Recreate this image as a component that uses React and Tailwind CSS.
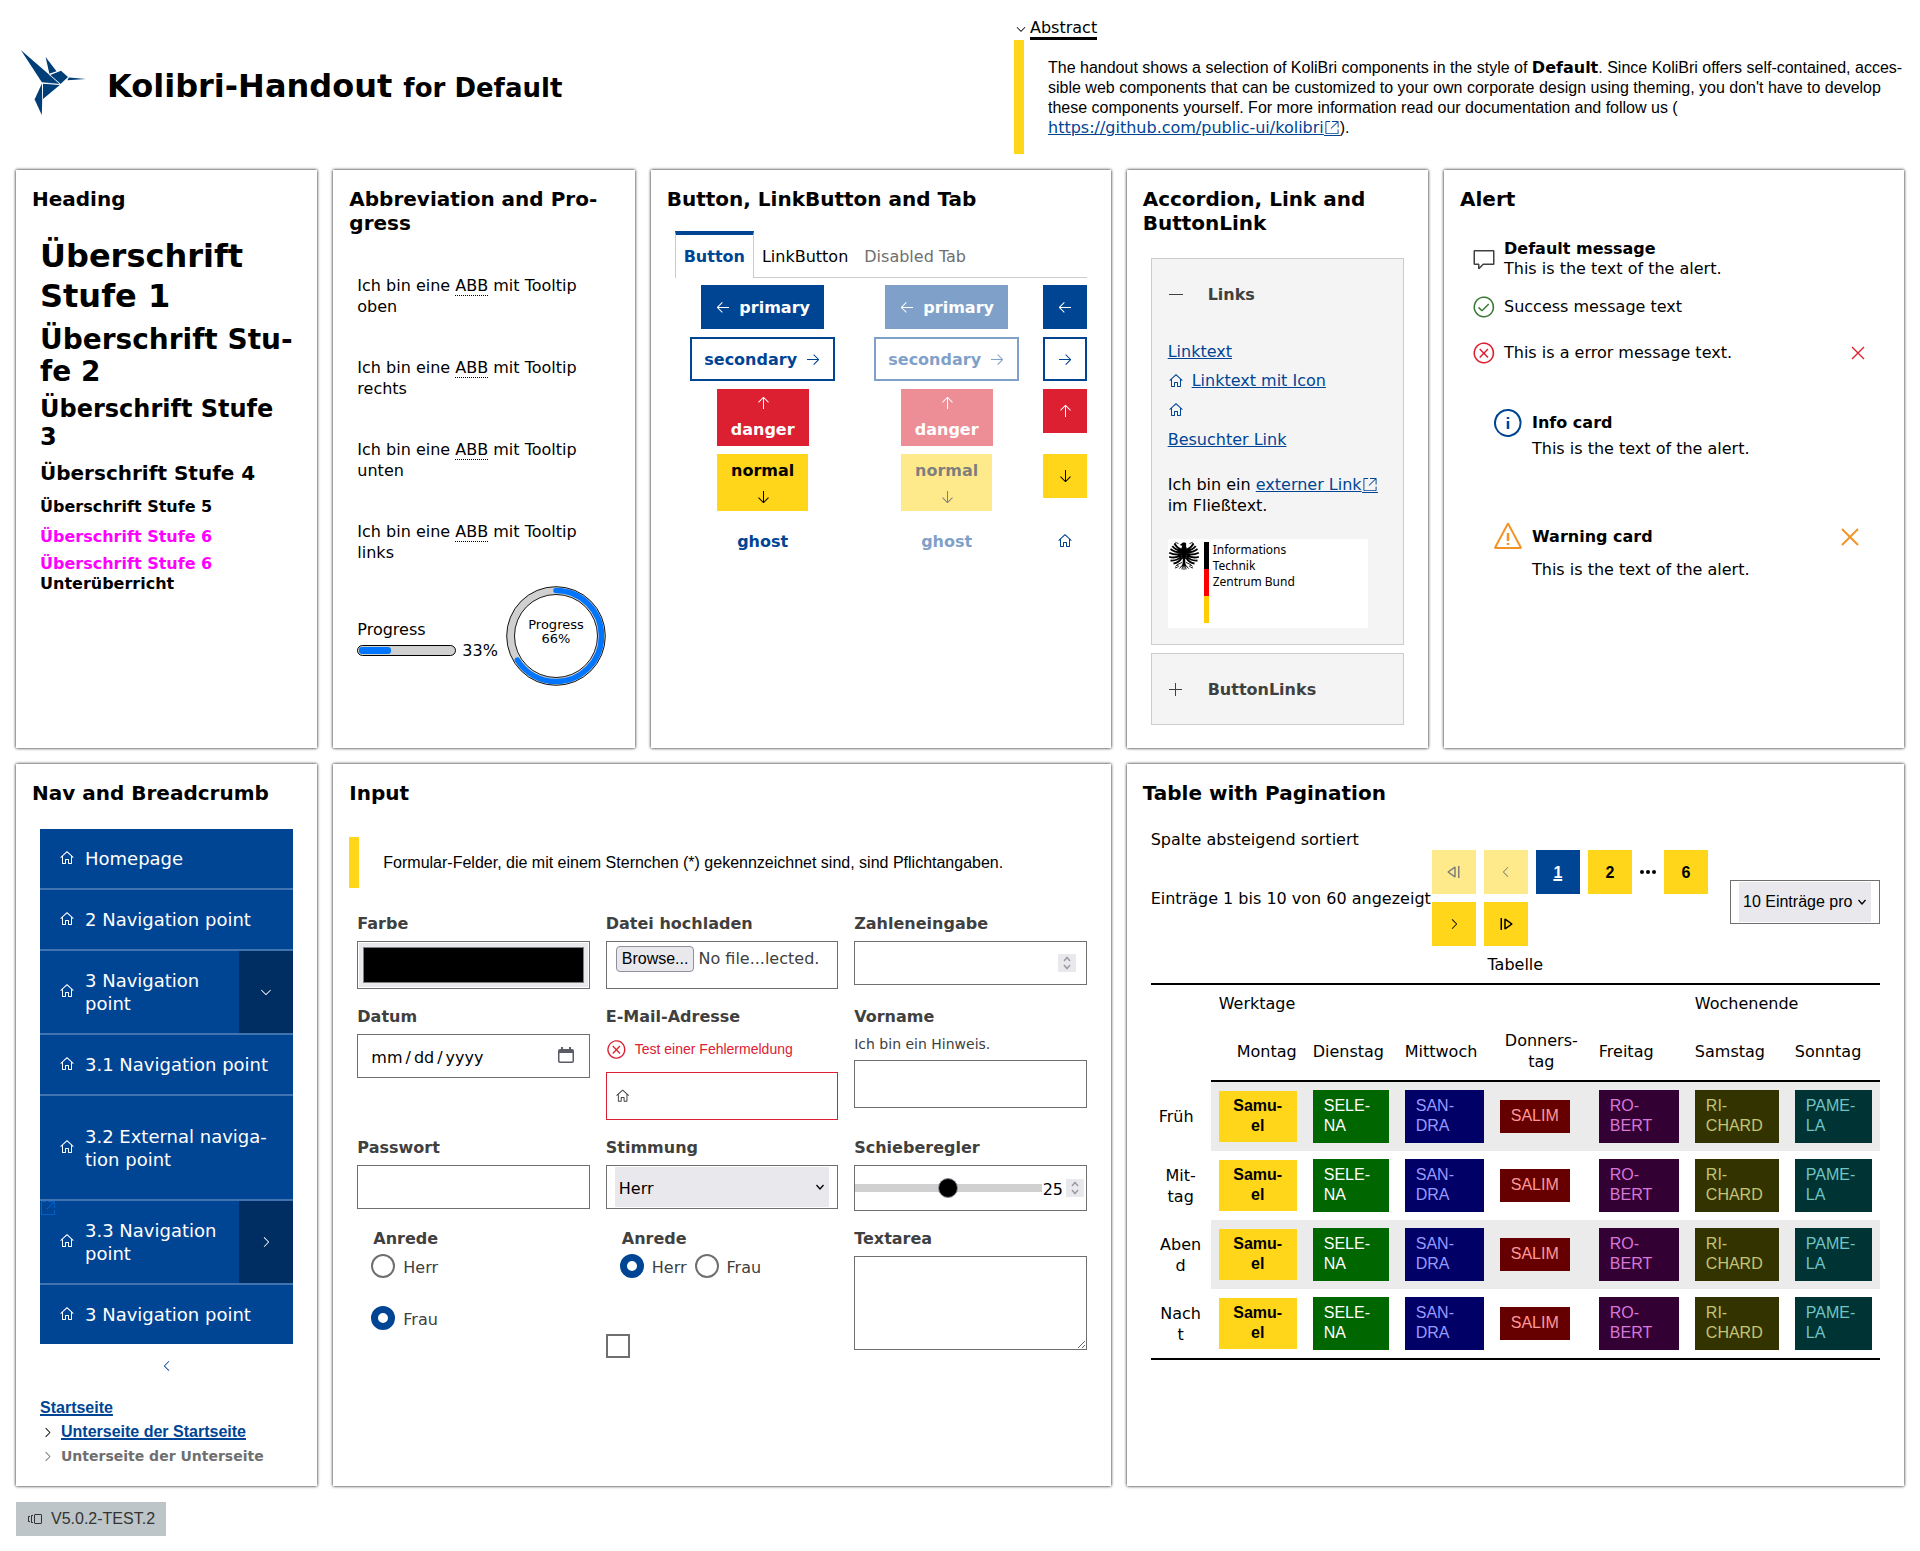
import React from "react";
import {
  VscAdd,
  VscArrowDown,
  VscArrowLeft,
  VscArrowRight,
  VscArrowUp,
  VscChevronDown,
  VscChevronLeft,
  VscChevronRight,
  VscComment,
  VscDebugContinue,
  VscDebugReverseContinue,
  VscError,
  VscHome,
  VscInfo,
  VscLinkExternal,
  VscPass,
  VscVersions,
  VscWarning,
} from "react-icons/vsc";

const SANS = "font-['DejaVu_Sans',Verdana,sans-serif]";
const ARIAL = "font-['Liberation_Sans',Arial,sans-serif]";

function Card({ title, span, children, tall }) {
  return (
    <section
      className={`${span} ${tall ? "min-h-[722px]" : "min-h-[578px]"} bg-white px-4 pt-[17px] pb-4 shadow-[0_0_3px_#000]`}
    >
      <h2 className="text-[20px] leading-6 font-bold">{title}</h2>
      {children}
    </section>
  );
}

function KolibriLogo() {
  return (
    <svg width="68" height="74" viewBox="20 48 68 74" fill="#003e78" aria-label="KoliBri" role="img">
      <polygon points="20.8,50 49,74.5 60,84.2 42,82.6" />
      <polygon points="45.6,57 56.5,71.2 49.4,73.8" />
      <polygon points="50.3,75 61,70.8 68,77 60.6,84" />
      <polygon points="69,77.4 86,79 67.4,80.3 68.3,78.4" />
      <polygon points="43,83.8 59.8,85 43,99" />
      <polygon points="41.9,83.6 42.2,100 41.8,115 34.6,99.5" />
      <path d="M42 82.6 60 84.2M49 74.5 60.4 84" stroke="#fff" strokeWidth="0.5" />
    </svg>
  );
}

function CloseIcon({ size, strokeWidth }) {
  return (
    <svg width={size} height={size} viewBox={`0 0 ${size} ${size}`} fill="none" stroke="currentColor" strokeWidth={strokeWidth} aria-hidden="true">
      <path d={`M1 1 ${size - 1} ${size - 1}M${size - 1} 1 1 ${size - 1}`} />
    </svg>
  );
}

function MinusIcon() {
  return (
    <svg width="16" height="16" viewBox="0 0 16 16" aria-hidden="true">
      <path d="M1 7h14v1H1z" fill="currentColor" />
    </svg>
  );
}

function Eagle() {
  return (
    <svg width="32" height="29" viewBox="0 0 32 29" fill="#000" aria-hidden="true">
      <path d="M17.500 0.800c-2-.6-3.800 0-4.300 1.300l-1.700.9 2.200.4c.5.900.2 1.700-.3 2.600C12.800 7.500 12.600 9.500 13 12c.3 2.500 1 4 1.800 5.500L14.500 22l-1.500 2.500h6L17.500 22l-.3-4.500C18 16 18.700 14.500 19 12c.4-2.500.2-4.500-.4-6-.5-1.500-.8-3-.3-4.200z" />
      <g fill="none" stroke="#000" strokeLinecap="butt">
        <path
          strokeWidth="1.800"
          d="M13.500 7.500C10.500 6.500 8 4.500 6.500 1.500M13.500 9C10 8.500 6.500 7 4.300 4M13.300 10.500C9 10.500 5.500 9.500 2.500 7M13.300 12C9 13 5 12.500 1.200 10.700M13.300 13C9.500 15.500 5 16 1.200 14.800M13.500 14C10.500 17.500 6.500 19 2.500 18.500M14 15.500C12 19 9 21 5.500 21.500"
        />
        <path
          strokeWidth="1.800"
          d="M18.500 7.500C21.500 6.500 24 4.500 25.500 1.500M18.500 9C22 8.500 25.500 7 27.700 4M18.700 10.500C23 10.500 26.500 9.500 29.500 7M18.700 12C23 13 27 12.500 30.800 10.700M18.700 13C22.500 15.500 27 16 30.800 14.800M18.500 14C21.500 17.500 25.500 19 29.500 18.500M18 15.500C20 19 23 21 26.500 21.500"
        />
        <path
          strokeWidth="0.900"
          d="M6.500 1.500c1.200-1.200 3-1 4 .5M25.500 1.500c-1.200-1.200-3-1-4 .5M14 20.500l-4.500 2 .8 2.500M18 20.500l4.500 2-.8 2.500M9.500 22.500l-2 1.800M22.500 22.500l2 1.800M13.500 24l-2 2.500M18.500 24l2 2.500M7 26l2.500-.8M25 26l-2.500-.8M14.500 24.500l-.5 3M17.500 24.500l.5 3M16 24v4"
        />
      </g>
    </svg>
  );
}

function Header() {
  return (
    <header className="grid grid-cols-[998fr_890fr] items-center">
      <div className="flex items-center gap-[19px] pl-1">
        <KolibriLogo />
        <h1 className="pt-1 text-[32px] leading-10 font-bold">
          Kolibri-Handout <small className="text-[26px]">for Default</small>
        </h1>
      </div>
      <details open className="group pt-[3px]">
        <summary className="flex cursor-pointer list-none items-center">
          <VscChevronDown size={14} className="mb-px" />
          <span className="ml-0.5 border-b-[3px] border-black text-[16px] leading-[18px]">Abstract</span>
        </summary>
        <p
          className={`${ARIAL} border-l-[10px] border-[#ffd619] pt-[18px] pb-4 pl-6 text-[16px] leading-5`}
        >
          The handout shows a selection of KoliBri components in the style of{" "}
          <strong className={SANS}>Default</strong>. Since KoliBri offers self-contained,
          acces&shy;sible web components that can be customized to your own corporate design using
          theming, you don't have to develop these components yourself. For more information read
          our documentation and follow us ({" "}
          <a href="#repo" className={`${SANS} inline-block leading-5 text-[#004494] underline`}>
            https://github.com/public-ui/kolibri
            <VscLinkExternal size={16} className="inline border-b border-[#004494] align-[-3px]" />
          </a>
          ).
        </p>
      </details>
    </header>
  );
}

function HeadingCard() {
  return (
    <Card title="Heading" span="col-span-2">
      <div className="mt-[25px] px-2 font-bold">
        <h1 className="text-[32px] leading-10">Überschrift Stufe 1</h1>
        <h2 className="mt-2 text-[28px] leading-8">Überschrift Stu&shy;fe 2</h2>
        <h3 className="mt-[7px] text-[24px] leading-7">Überschrift Stufe 3</h3>
        <h4 className="mt-2.5 text-[20px] leading-6">Überschrift Stufe 4</h4>
        <h5 className="mt-3 text-[16px] leading-5">Überschrift Stufe 5</h5>
        <h6 className="mt-2.5 text-[16px] leading-5 text-[#f0f]">Überschrift Stufe 6</h6>
        <hgroup className="mt-[7px] text-[16px] leading-5">
          <h6 className="text-[#f0f]">Überschrift Stufe 6</h6>
          <p>Unterüberricht</p>
        </hgroup>
      </div>
    </Card>
  );
}

function AbbrCard() {
  return (
    <Card title={"Abbreviation and Pro\u00ADgress"} span="col-span-2">
      <div className="flex flex-col gap-10 px-2 pt-10 text-[16px] leading-[21px]">
        {["oben", "rechts", "unten", "links"].map((side) => (
          <p key={side} className="max-w-60">
            Ich bin eine{" "}
            <abbr title="Abbreviation" className="border-b border-dotted border-black no-underline [text-decoration:none]">
              ABB
            </abbr>{" "}
            mit Tooltip {side}
          </p>
        ))}
      </div>
      <div className="mt-[23px] flex items-center gap-2 pl-2">
        <div className="pt-2 text-[16px] leading-[21px]">
          <div id="progress-label">Progress</div>
          <div className="flex items-center gap-1.5">
            <div
              role="progressbar"
              aria-labelledby="progress-label"
              aria-valuenow={33}
              className="flex h-[11px] w-[99px] items-center rounded-full border border-black bg-[#d0d0d0] px-px"
            >
              <div className="h-[7px] rounded-[3px] bg-[#0075ff]" style={{ width: "33%" }} />
            </div>
            33%
          </div>
        </div>
        <svg width="100" height="100" viewBox="0 0 100 100" className="shrink-0" role="img" aria-label="Progress 66%">
          <circle cx="50" cy="50" r="45.500" fill="none" stroke="#d0d0d0" strokeWidth="8" />
          <circle cx="50" cy="50" r="49.300" fill="none" stroke="#000" strokeWidth="0.900" />
          <circle cx="50" cy="50" r="41.500" fill="none" stroke="#000" strokeWidth="0.900" />
          <circle
            cx="50"
            cy="50"
            r="45.500"
            fill="none"
            stroke="#0075ff"
            strokeWidth="5.500"
            strokeLinecap="round"
            strokeDasharray="188.700 300"
            transform="rotate(-90 50 50)"
          />
          <g textAnchor="middle" fontSize="13" fontFamily="DejaVu Sans, Verdana, sans-serif">
            <text x="50" y="43">Progress</text>
            <text x="50" y="57">66%</text>
          </g>
        </svg>
      </div>
    </Card>
  );
}

const KINDS = {
  primary: "border-[#004494] bg-[#004494] text-white",
  secondary: "border-[#004494] bg-white text-[#004494]",
  danger: "border-[#dc2032] bg-[#dc2032] text-white",
  normal: "border-[#ffd619] bg-[#ffd619] text-black",
  ghost: "border-transparent bg-transparent text-[#004494]",
};

const BUTTON_ROWS = [
  { kind: "primary", Icon: VscArrowLeft, dir: "flex-row" },
  { kind: "secondary", Icon: VscArrowRight, dir: "flex-row-reverse" },
  { kind: "danger", Icon: VscArrowUp, dir: "flex-col" },
  { kind: "normal", Icon: VscArrowDown, dir: "flex-col-reverse" },
  { kind: "ghost", dir: "flex-row" },
];

function KolButton({ kind, Icon, dir, disabled }) {
  return (
    <button
      type="button"
      disabled={disabled}
      className={`flex min-h-11 items-center justify-center gap-2 border-2 px-3 py-1 text-[16px] leading-[21px] font-bold ${dir} ${KINDS[kind]} ${disabled ? "opacity-50" : ""}`}
    >
      {Icon && <Icon size={16} />}
      <span>{kind}</span>
    </button>
  );
}

function ButtonCard() {
  return (
    <Card title="Button, LinkButton and Tab" span="col-span-3">
      <div className="mt-5 px-2">
        <div role="tablist" className="flex text-[16px] leading-[21px]">
          <button
            role="tab"
            aria-selected="true"
            className="border-x border-t-4 border-x-[#ccc] border-t-[#004494] px-2 pt-[11px] pb-[11px] font-bold text-[#004494]"
          >
            Button
          </button>
          <button role="tab" aria-selected="false" className="border-b border-[#ccc] px-2 pt-[15px] pb-2.5">
            LinkButton
          </button>
          <button role="tab" aria-selected="false" disabled className="border-b border-[#ccc] px-2 pt-[15px] pb-2.5 text-[#6f6f6f]">
            Disabled Tab
          </button>
          <span className="grow border-b border-[#ccc]" />
        </div>
        <div className="mt-[7px] grid grid-cols-[1fr_1fr_44px] items-start justify-items-center gap-2">
          {BUTTON_ROWS.map((row) => {
            const Icon = row.Icon || VscHome;
            return (
              <React.Fragment key={row.kind}>
                <KolButton {...row} />
                <KolButton {...row} disabled />
                <button
                  type="button"
                  aria-label={row.kind}
                  className={`flex size-11 items-center justify-center border-2 ${KINDS[row.kind]}`}
                >
                  <Icon size={16} />
                </button>
              </React.Fragment>
            );
          })}
        </div>
      </div>
    </Card>
  );
}

const LINK = "text-[#004494] underline";

function AccordionCard() {
  return (
    <Card title="Accordion, Link and ButtonLink" span="col-span-2">
      <div className="mt-[23px] flex flex-col gap-2 px-2 text-[16px] leading-[21px]">
        <section className="border border-[#ccc] bg-[#f4f4f4] px-4 pb-4">
          <button type="button" aria-expanded="true" className="flex w-full items-center gap-6 pt-[25px] pb-6 font-bold text-[#404040]">
            <MinusIcon />
            Links
          </button>
          <ul className="flex flex-col items-start gap-2 pt-3">
            <li>
              <a href="#link" className={LINK}>Linktext</a>
            </li>
            <li>
              <a href="#icon" className="flex items-center gap-2 text-[#004494]">
                <VscHome size={16} />
                <span className="underline">Linktext mit Icon</span>
              </a>
            </li>
            <li className="flex h-[21px] items-center">
              <a href="#home" aria-label="Home" className="text-[#004494]">
                <VscHome size={16} />
              </a>
            </li>
            <li className="pt-px">
              <a href="#visited" className={LINK}>Besuchter Link</a>
            </li>
          </ul>
          <p className="mt-6">
            Ich bin ein{" "}
            <a href="#extern" className={`${LINK} whitespace-nowrap`}>
              externer Link
              <VscLinkExternal size={16} className="inline border-b border-[#004494] align-[-3px]" />
            </a>{" "}
            im Fließtext.
          </p>
          <a href="#itzbund" className="mt-[23px] flex h-[89px] max-w-[200px] items-start bg-white pt-[3px] text-black">
            <Eagle />
            <svg width="5" height="81" viewBox="0 0 5 81" className="ml-1" aria-hidden="true">
              <path fill="#000" d="M0 0h5v27H0z" />
              <path fill="#f00" d="M0 27h5v27H0z" />
              <path fill="#fc0" d="M0 54h5v27H0z" />
            </svg>
            <span className="ml-1 font-['Noto_Sans',sans-serif] text-[12px] leading-4">
              Informations
              <br />
              Technik
              <br />
              Zentrum Bund
            </span>
          </a>
        </section>
        <section className="border border-[#ccc] bg-[#f4f4f4] px-4">
          <button type="button" aria-expanded="false" className="flex w-full items-center gap-6 pt-[25px] pb-6 font-bold text-[#404040]">
            <VscAdd size={16} />
            ButtonLinks
          </button>
        </section>
      </div>
    </Card>
  );
}

function AlertCard() {
  return (
    <Card title="Alert" span="col-span-3">
      <div className="mt-7 pr-2 pl-3 text-[16px] leading-5">
        <div role="alert" className="flex items-center gap-2">
          <VscComment size={24} className="text-[#404040]" />
          <div>
            <strong className="block">Default message</strong>
            This is the text of the alert.
          </div>
        </div>
        <div role="alert" className="mt-4 flex items-center gap-2">
          <VscPass size={24} className="text-[#3b7b35]" />
          Success message text
        </div>
        <div role="alert" className="mt-3 flex items-center gap-2">
          <VscError size={24} className="text-[#dc2032]" />
          <span className="grow">This is a error message text.</span>
          <button type="button" aria-label="Close" className="flex size-11 items-center justify-center text-[#dc2032]">
            <CloseIcon size={14} strokeWidth={1.4} />
          </button>
        </div>
        <div role="alert" className="mt-8 pr-2 pl-5">
          <div className="flex items-center gap-2">
            <VscInfo size={32} className="text-[#004494]" />
            <strong>Info card</strong>
          </div>
          <div className="pl-10">This is the text of the alert.</div>
        </div>
        <div role="alert" className="mt-14 pr-2 pl-5">
          <div className="flex items-center gap-2">
            <VscWarning size={32} className="text-[#f39325]" />
            <strong className="grow">Warning card</strong>
            <button type="button" aria-label="Close" className="flex size-11 items-center justify-center text-[#f39325]">
              <CloseIcon size={18} strokeWidth={2} />
            </button>
          </div>
          <div className="mt-px pl-10">This is the text of the alert.</div>
        </div>
      </div>
    </Card>
  );
}

const NAV = [
  { label: "Homepage" },
  { label: "2 Navigation point" },
  { label: "3 Navigation point", Toggle: VscChevronDown },
  { label: "3.1 Navigation point" },
  { label: "3.2 External naviga\u00ADtion point", external: true },
  { label: "3.3 Navigation point", Toggle: VscChevronRight },
  { label: "3 Navigation point" },
];

function NavCard() {
  return (
    <Card title="Nav and Breadcrumb" span="col-span-2" tall>
      <div className="mt-6 px-2">
        <nav aria-label="Main" className="bg-[#004494] text-[18px] leading-[23px] text-white">
          <ul>
            {NAV.map(({ label, Toggle, external }) => (
              <li
                key={label}
                className={`relative flex border-b-2 border-[#4073af] last:border-b-0 ${external ? "min-h-[105px]" : ""}`}
              >
                <a href="#nav" className="flex grow items-center gap-2.5 py-[18px] pr-5 pl-[19px]">
                  <VscHome size={16} className="mb-0.5 shrink-0" />
                  <span>{label}</span>
                </a>
                {external && (
                  <VscLinkExternal size={16} className="absolute top-full left-0 z-10 mt-px text-[#0062c8]" />
                )}
                {Toggle && (
                  <button type="button" aria-label="Toggle" className="flex w-[54px] shrink-0 items-center justify-center bg-[#002d62]">
                    <Toggle size={16} />
                  </button>
                )}
              </li>
            ))}
          </ul>
        </nav>
        <button type="button" aria-label="Collapse" className="mx-auto flex size-11 items-center justify-center text-[#004494]">
          <VscChevronLeft size={16} />
        </button>
        <nav aria-label="Breadcrumb" className={`${ARIAL} mt-2 text-[16px] leading-6 font-bold`}>
          <ul>
            <li>
              <a href="#start" className={`${LINK} decoration-2`}>Startseite</a>
            </li>
            <li className="flex items-center gap-1.5">
              <VscChevronRight size={15} />
              <a href="#sub" className={`${LINK} decoration-2`}>Unterseite der Startseite</a>
            </li>
            <li className="flex items-center gap-1.5 text-[#6f6f6f]">
              <VscChevronRight size={15} />
              <span className={`${SANS} text-[14px] whitespace-nowrap`}>Unterseite der Unterseite</span>
            </li>
          </ul>
        </nav>
      </div>
    </Card>
  );
}

const BOX = "w-full border border-[#6f6f6f] bg-white";

function Field({ id, label, children }) {
  return (
    <div className="text-[16px] leading-[21px] text-[#404040]">
      <label htmlFor={id} className="mb-[7px] block pt-px font-bold">{label}</label>
      {children}
    </div>
  );
}

function Spinner() {
  return (
    <svg width="18" height="18" viewBox="0 0 18 18" className="shrink-0" aria-hidden="true">
      <path fill="#e9e9ed" d="M0 0h18v18H0z" />
      <path fill="none" stroke="#9a9aa5" strokeWidth="1.500" d="M6 7l3-3.500L12 7M6 11l3 3.500 3-3.500" />
    </svg>
  );
}

function SelectArrow() {
  return (
    <svg width="10" height="10" viewBox="0 0 10 10" className="pointer-events-none" aria-hidden="true">
      <path fill="none" stroke="#000" strokeWidth="1.300" d="M1.500 3l3.500 4 3.500-4" />
    </svg>
  );
}

const NO_SPIN =
  "appearance-none [-moz-appearance:textfield] [&::-webkit-inner-spin-button]:appearance-none outline-none";

function Radio({ name, label, checked }) {
  const id = `${name}-${label}`;
  return (
    <div className="flex items-center gap-2">
      <input
        type="radio"
        id={id}
        name={name}
        defaultChecked={checked}
        className="size-6 appearance-none rounded-full border-2 border-[#6f6f6f] bg-white checked:border-[7px] checked:border-[#004494]"
      />
      <label htmlFor={id} className="pt-0.5">{label}</label>
    </div>
  );
}

function InputCard() {
  return (
    <Card title="Input" span="col-span-5" tall>
      <p className={`${ARIAL} mt-8 border-l-[10px] border-[#ffd619] py-4 pl-6 text-[16px] leading-[19px]`}>
        Formular-Felder, die mit einem Sternchen (*) gekennzeichnet sind, sind Pflichtangaben.
      </p>
      <form className="mt-6 grid grid-cols-3 gap-4 px-2">
        <Field id="color" label="Farbe">
          <input
            id="color"
            type="color"
            defaultValue="#000000"
            className="block h-12 w-full appearance-none border border-[#6f6f6f] bg-[#e9e9ed] bg-clip-content p-px [&::-webkit-color-swatch]:border-[#808080] [&::-webkit-color-swatch-wrapper]:p-1"
          />
        </Field>
        <Field id="file" label="Datei hochladen">
          <div className={`${BOX} flex h-12 items-start gap-1 px-[9px] pt-1`}>
            <input id="file" type="file" className="sr-only" />
            <label htmlFor="file" className={`${ARIAL} rounded border border-[#8f8f9d] bg-[#e9e9ed] px-[5px] leading-6 text-black`}>
              Browse...
            </label>
            <span className="pt-px leading-6">No file...lected.</span>
          </div>
        </Field>
        <Field id="number" label="Zahleneingabe">
          <div className={`${BOX} flex h-11 items-center pr-2.5 pl-2`}>
            <input id="number" type="number" className={`h-full min-w-0 grow ${NO_SPIN}`} />
            <Spinner />
          </div>
        </Field>

        <Field id="date" label="Datum">
          <div className="relative">
            <input
              id="date"
              type="date"
              className={`${BOX} block h-11 px-3 pt-0.5 text-black [&::-webkit-calendar-picker-indicator]:opacity-0 [&::-webkit-datetime-edit-text]:px-0.5`}
            />
            <svg width="16" height="16" viewBox="0 0 16 16" className="pointer-events-none absolute top-[13px] right-4" aria-hidden="true">
              <path fill="#5b5b66" d="M3 0h2v2h6V0h2v2h1a2 2 0 0 1 2 2v10a2 2 0 0 1-2 2H2a2 2 0 0 1-2-2V4a2 2 0 0 1 2-2h1zM1.500 6v8l.5.500h12l.5-.5V6z" />
            </svg>
          </div>
        </Field>
        <Field id="email" label="E-Mail-Adresse">
          <div className={`${ARIAL} mb-2 flex h-[30px] items-center gap-2 text-[14px] text-[#dc2032]`}>
            <VscError size={21} />
            Test einer Fehlermeldung
          </div>
          <div className="flex h-12 items-center gap-2 border border-[#dc2032] bg-white px-2">
            <VscHome size={16} />
            <input id="email" type="email" className="h-full min-w-0 grow outline-none" />
          </div>
        </Field>
        <Field id="firstname" label="Vorname">
          <p className="mb-[7px] pt-px text-[14px] leading-[18px]">Ich bin ein Hinweis.</p>
          <input id="firstname" type="text" className={`${BOX} block h-12 px-2`} />
        </Field>

        <Field id="password" label="Passwort">
          <input id="password" type="password" className={`${BOX} block h-11 px-2`} />
        </Field>
        <Field id="mood" label="Stimmung">
          <div className={`${BOX} h-11 px-2 py-px`}>
            <div className="relative h-10">
              <select id="mood" className="h-full w-full appearance-none bg-[#e9e9ed] px-1 pt-0.5 text-black">
                <option>Herr</option>
                <option>Frau</option>
              </select>
              <span className="pointer-events-none absolute inset-y-0 right-1 flex items-center">
                <SelectArrow />
              </span>
            </div>
          </div>
        </Field>
        <Field id="range" label="Schieberegler">
          <div className={`${BOX} flex h-[46px] items-center pr-0.5`}>
            <input
              id="range"
              type="range"
              min="0"
              max="50"
              defaultValue="25"
              className="h-2 min-w-0 grow appearance-none bg-[#d0d0d0] [&::-webkit-slider-thumb]:size-5 [&::-webkit-slider-thumb]:appearance-none [&::-webkit-slider-thumb]:rounded-full [&::-webkit-slider-thumb]:border [&::-webkit-slider-thumb]:border-[#8f8f9d] [&::-webkit-slider-thumb]:bg-black"
            />
            <input type="number" aria-label="Schieberegler" defaultValue="25" className={`mr-0.5 w-[22px] pt-0.5 pl-px text-black ${NO_SPIN}`} />
            <Spinner />
          </div>
        </Field>

        <fieldset className="px-3.5 text-[16px] leading-[21px] text-[#404040]">
          <legend className="ml-0.5 pt-px font-bold">Anrede</legend>
          <div className="mt-[5px] flex flex-col gap-7">
            <Radio name="anrede1" label="Herr" />
            <Radio name="anrede1" label="Frau" checked />
          </div>
        </fieldset>
        <div className="text-[16px] leading-[21px] text-[#404040]">
          <fieldset className="px-3.5">
            <legend className="ml-0.5 pt-px font-bold">Anrede</legend>
            <div className="mt-[5px] flex gap-2">
              <Radio name="anrede2" label="Herr" checked />
              <Radio name="anrede2" label="Frau" />
            </div>
          </fieldset>
          <input
            type="checkbox"
            aria-label="Checkbox"
            className="mt-14 block size-6 appearance-none border-2 border-[#6f6f6f] bg-white"
          />
        </div>
        <Field id="textarea" label="Textarea">
          <textarea id="textarea" className={`${BOX} block h-[94px] resize-y px-2`} />
        </Field>
      </form>
    </Card>
  );
}

const PAGE_BTN = `${ARIAL} flex size-11 items-center justify-center text-[16px] font-bold`;

const PEOPLE = [
  { text: "SELE\u00ADNA", cls: "bg-[#006600] text-white" },
  { text: "SAN\u00ADDRA", cls: "bg-[#000066] text-[#9999ff]" },
  { text: "SALIM", cls: "w-fit bg-[#660000] text-[#ff9999]" },
  { text: "RO\u00ADBERT", cls: "bg-[#330033] text-[#d877d8]" },
  { text: "RI\u00ADCHARD", cls: "bg-[#333300] text-[#c4c474]" },
  { text: "PAME\u00ADLA", cls: "bg-[#003333] text-[#70c4c4]" },
];

const DAYS = [
  { text: "Montag", cls: "text-right" },
  { text: "Dienstag", cls: "text-left" },
  { text: "Mittwoch", cls: "text-left" },
  { text: "Donners\u00ADtag", cls: "text-center" },
  { text: "Freitag", cls: "text-left" },
  { text: "Samstag", cls: "text-left" },
  { text: "Sonntag", cls: "text-left" },
];

function TableCard() {
  return (
    <Card title="Table with Pagination" span="col-span-5" tall>
      <div className="mt-6 px-2 text-[16px] leading-[21px]">
        <p>Spalte absteigend sortiert</p>
        <div className="flex items-center">
          <span className="shrink-0 pr-px whitespace-nowrap">Einträge 1 bis 10 von 60 angezeigt</span>
          <nav aria-label="Pagination" className="flex min-w-0 flex-1 flex-wrap items-center gap-2">
            <button type="button" disabled aria-label="First page" className={`${PAGE_BTN} bg-[#ffd619] opacity-50`}>
              <VscDebugReverseContinue size={16} />
            </button>
            <button type="button" disabled aria-label="Previous page" className={`${PAGE_BTN} bg-[#ffd619] opacity-50`}>
              <VscChevronLeft size={16} />
            </button>
            <button type="button" aria-current="page" className={`${PAGE_BTN} bg-[#004494] text-white underline decoration-2`}>
              1
            </button>
            <button type="button" className={`${PAGE_BTN} bg-[#ffd619]`}>2</button>
            <span className="flex w-4 justify-between" aria-hidden="true">
              <i className="size-1 rounded-full bg-black" />
              <i className="size-1 rounded-full bg-black" />
              <i className="size-1 rounded-full bg-black" />
            </span>
            <button type="button" className={`${PAGE_BTN} bg-[#ffd619]`}>6</button>
            <button type="button" aria-label="Next page" className={`${PAGE_BTN} bg-[#ffd619]`}>
              <VscChevronRight size={16} />
            </button>
            <button type="button" aria-label="Last page" className={`${PAGE_BTN} bg-[#ffd619]`}>
              <VscDebugContinue size={16} />
            </button>
          </nav>
          <div className="mt-2 h-11 w-[150px] shrink-0 border border-[#6f6f6f] px-2 py-px">
            <div className="relative h-10">
              <select aria-label="Einträge pro Seite" className={`${ARIAL} h-full w-full appearance-none bg-[#e9e9ed] px-1 pb-0.5 text-[16px]`}>
                <option>10 Einträge pro</option>
              </select>
              <span className="pointer-events-none absolute inset-y-0 right-1 flex items-center">
                <SelectArrow />
              </span>
            </div>
          </div>
        </div>
        <table className="mt-2 w-full table-fixed border-separate border-spacing-0">
          <caption className="pb-2">Tabelle</caption>
          <colgroup>
            <col className="w-[60px]" />
            <col className="w-[94px]" />
            <col className="w-[92px]" />
            <col className="w-[95px]" />
            <col className="w-[99px]" />
            <col className="w-[96px]" />
            <col className="w-[100px]" />
            <col className="w-[93px]" />
          </colgroup>
          <thead>
            <tr>
              <td rowSpan={2} className="border-t-2 border-black" />
              <th colSpan={5} className="border-t-2 border-black p-2 text-left font-normal">Werktage</th>
              <th colSpan={2} className="border-t-2 border-black p-2 text-left font-normal">Wochenende</th>
            </tr>
            <tr>
              {DAYS.map((day) => (
                <th key={day.text} className={`border-b-2 border-black p-2 font-normal ${day.cls}`}>{day.text}</th>
              ))}
            </tr>
          </thead>
          <tbody>
            {["Früh", "Mit\u00ADtag", "Abend", "Nacht"].map((time, row) => (
              <tr key={time} className="group">
                <th className={`p-2 font-normal wrap-break-word group-last:border-b-2 group-last:border-black ${row === 0 ? "text-left" : "text-center"}`}>
                  {time}
                </th>
                <td className="p-2 group-last:border-b-2 group-last:border-black group-odd:bg-[#ebebeb]">
                  <button type="button" className={`${ARIAL} h-[51px] w-full bg-[#ffd619] px-3.5 pb-px leading-5 font-bold`}>
                    Samu&shy;el
                  </button>
                </td>
                {PEOPLE.map((person) => (
                  <td key={person.text} className="p-2 group-last:border-b-2 group-last:border-black group-odd:bg-[#ebebeb]">
                    <div className={`${ARIAL} px-[11px] pt-1.5 pb-[7px] leading-5 ${person.cls}`}>{person.text}</div>
                  </td>
                ))}
              </tr>
            ))}
          </tbody>
        </table>
      </div>
    </Card>
  );
}

export default function App() {
  return (
    <div className={`${SANS} bg-white p-4 text-black`}>
      <Header />
      <main className="mt-4 grid grid-cols-12 gap-4">
        <HeadingCard />
        <AbbrCard />
        <ButtonCard />
        <AccordionCard />
        <AlertCard />
        <NavCard />
        <InputCard />
        <TableCard />
      </main>
      <div className={`${ARIAL} mt-4 inline-flex items-center gap-2 bg-[#bec5c9] px-[11px] text-[16px] leading-[34px] text-[#333]`}>
        <VscVersions size={16} />
        V5.0.2-TEST.2
      </div>
    </div>
  );
}
